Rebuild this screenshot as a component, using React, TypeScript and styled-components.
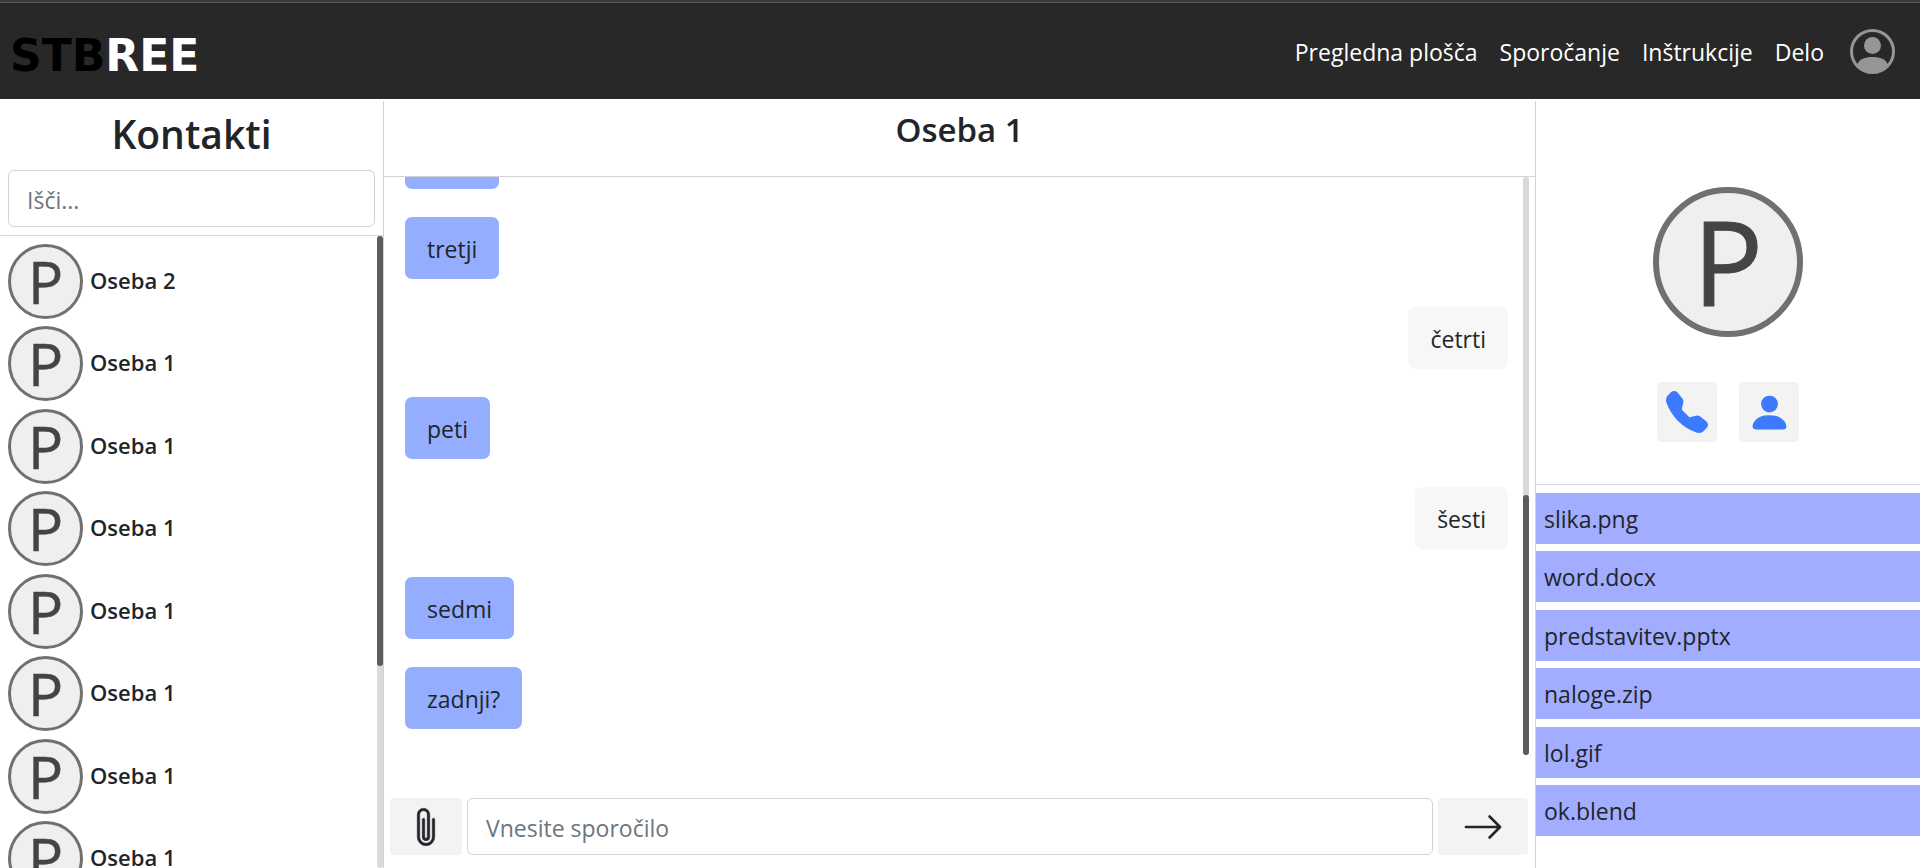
import React from "react";
import styled, { createGlobalStyle } from "styled-components";
import { BsArrowRight, BsPaperclip, BsPersonFill, BsTelephoneFill } from "react-icons/bs";

const GlobalStyle = createGlobalStyle`
  *, *::before, *::after { box-sizing: border-box; }
  body {
    margin: 0;
    background: #fff;
    color: #212529;
    font-family: "Open Sans", "Noto Sans", sans-serif;
    font-size: 23px;
    line-height: 36px;
  }
  h1, h2, p, ul { margin: 0; padding: 0; }
  ul { list-style: none; }
  button, input { font: inherit; color: inherit; }
`;

const line = "1px solid #d3d3d3";

const Page = styled.div`
  display: flex;
  flex-direction: column;
  gap: 2px;
  height: 100vh;
  overflow: hidden;
`;

const NavBar = styled.header`
  display: flex;
  flex: none;
  align-items: center;
  justify-content: space-between;
  height: 99px;
  padding: 2px 25px 0 10px;
  border-top: 2px solid #3b3b3b;
  box-shadow: inset 0 1px 0 #5a5a5a;
  background: #282828;
`;

const Logo = styled.a`
  padding-top: 8px;
  color: #000;
  font-family: "DejaVu Sans", sans-serif;
  font-size: 44px;
  font-weight: 700;
  line-height: 48px;
  text-decoration: none;
`;

const LogoAccent = styled.span`
  color: #fff;
`;

const NavLinks = styled.nav`
  display: flex;
  align-items: center;
  gap: 22px;
`;

const NavLink = styled.a`
  color: #fff;
  text-decoration: none;
`;

const ProfileButton = styled.button`
  display: flex;
  margin-left: 4px;
  padding: 0;
  border: 0;
  background: none;
`;

const Columns = styled.main`
  display: grid;
  flex: 1;
  grid-template-columns: 1fr 3fr 1fr;
  min-height: 0;
`;

const ContactsPanel = styled.aside`
  display: flex;
  flex-direction: column;
  min-width: 0;
  min-height: 0;
  border-right: ${line};
`;

const ContactsHeader = styled.div`
  padding: 5px 8px 8px;
  border-bottom: ${line};
`;

const PanelTitle = styled.h1`
  margin-bottom: 8px;
  font-size: 39px;
  font-weight: 600;
  line-height: 56px;
  text-align: center;
`;

const TextField = styled.input`
  display: block;
  width: 100%;
  min-width: 0;
  height: 57px;
  padding: 2px 18px 0;
  border: 1px solid #ced4da;
  border-radius: 6px;
  background: #fff;
  outline: 0;
  &::placeholder { color: #6c757d; opacity: 1; }
`;

const ScrollArea = styled.div`
  display: flex;
  flex: 1;
  min-height: 0;
`;

const ScrollTrack = styled.div<{ $atEnd?: boolean }>`
  display: flex;
  flex: none;
  flex-direction: column;
  justify-content: ${(p) => (p.$atEnd ? "flex-end" : "flex-start")};
  width: 6px;
  margin-right: ${(p) => (p.$atEnd ? "6px" : "0")};
  border-radius: 3px;
  background: #d9d9d9;
`;

const ScrollThumb = styled.div<{ $share: number }>`
  height: ${(p) => p.$share}%;
  border-radius: 3px;
  background: #5c5c5c;
`;

const ContactList = styled.ul`
  flex: 1;
  overflow: hidden;
  padding: 8px 0 0 8px;
`;

const Contact = styled.li`
  display: flex;
  align-items: center;
  gap: 7px;
  margin-bottom: 7px;
  &:nth-child(even) { margin-bottom: 8px; }
`;

const ContactName = styled.span`
  padding-bottom: 4px;
  font-size: 22px;
  font-weight: 600;
`;

const ChatPanel = styled.section`
  display: flex;
  flex-direction: column;
  min-width: 0;
  min-height: 0;
  border-right: ${line};
`;

const ChatTitle = styled.h2`
  flex: none;
  height: 76px;
  padding-top: 5px;
  border-bottom: ${line};
  font-size: 33px;
  font-weight: 600;
  line-height: 48px;
  text-align: center;
`;

const Messages = styled.ul`
  display: flex;
  flex: 1;
  flex-direction: column;
  justify-content: flex-end;
  gap: 28px;
  overflow: hidden;
  padding: 0 15px 26px 21px;
`;

const Bubble = styled.li<{ $own?: boolean }>`
  flex: none;
  align-self: ${(p) => (p.$own ? "flex-end" : "flex-start")};
  padding: 14px 22px 12px;
  border-radius: 7px;
  background: ${(p) => (p.$own ? "#f7f7f7" : "#94adff")};
`;

const Composer = styled.form`
  display: flex;
  flex: none;
  gap: 5px;
  padding: 43px 7px 13px 6px;
`;

const ComposerButton = styled.button<{ $wide?: boolean }>`
  display: flex;
  flex: none;
  align-items: center;
  justify-content: center;
  width: ${(p) => (p.$wide ? "90px" : "72px")};
  padding: 0;
  border: 0;
  border-radius: 4px;
  background: #f3f3f3;
`;

const ClipIcon = styled(BsPaperclip)`
  overflow: visible;
  stroke: currentColor;
  stroke-width: 0.2px;
`;

const DetailsPanel = styled.aside`
  min-width: 0;
`;

const Profile = styled.div`
  display: flex;
  flex-direction: column;
  align-items: center;
  gap: 45px;
  padding: 86px 0 42px;
  border-bottom: ${line};
`;

const Actions = styled.div`
  display: flex;
  gap: 22px;
`;

const ActionButton = styled.button`
  display: flex;
  align-items: center;
  justify-content: center;
  width: 60px;
  height: 60px;
  padding: 0;
  border: 0;
  border-radius: 4px;
  background: #f3f3f3;
  color: #3d7aff;
`;

const FileList = styled.ul`
  padding-top: 8px;
`;

const FileItem = styled.li`
  margin-bottom: 7px;
  padding: 8px 8px 7px;
  background: #a3adff;
  &:nth-child(even) { margin-bottom: 8px; }
`;

const FileLink = styled.a`
  display: block;
  color: inherit;
  text-decoration: none;
`;

const AvatarSvg = styled.svg`
  display: block;
  flex: none;
  overflow: visible;
`;

function Avatar({ size }: { size: number }) {
  return (
    <AvatarSvg width={size} height={size} viewBox="0 0 150 150" aria-hidden="true">
      <circle cx="75" cy="75" r="72" fill="#efefef" stroke="#707070" strokeWidth="6" />
      <text x="75" y="119" fill="#444" stroke="#444" strokeWidth="1" fontSize="117" textAnchor="middle">
        P
      </text>
    </AvatarSvg>
  );
}

function ProfileIcon() {
  return (
    <svg width="45" height="45" viewBox="0 0 90 90" aria-hidden="true">
      <circle cx="45" cy="45" r="42" fill="none" stroke="#969696" strokeWidth="6" />
      <circle cx="45" cy="33" r="17" fill="#969696" />
      <path d="M14 72C18 60 30 56 45 56S72 60 76 72C68 82 58 87 45 87S22 82 14 72Z" fill="#969696" />
    </svg>
  );
}

const links = ["Pregledna plošča", "Sporočanje", "Inštrukcije", "Delo"];

const contacts = ["Oseba 2", "Oseba 1", "Oseba 1", "Oseba 1", "Oseba 1", "Oseba 1", "Oseba 1", "Oseba 1"];

const messages = [
  { text: "tretji", own: false },
  { text: "tretji", own: false },
  { text: "četrti", own: true },
  { text: "peti", own: false },
  { text: "šesti", own: true },
  { text: "sedmi", own: false },
  { text: "zadnji?", own: false },
];

const files = ["slika.png", "word.docx", "predstavitev.pptx", "naloge.zip", "lol.gif", "ok.blend"];

export default function App() {
  return (
    <>
      <GlobalStyle />
      <Page>
        <NavBar>
          <Logo href="#">
            STB<LogoAccent>REE</LogoAccent>
          </Logo>
          <NavLinks>
            {links.map((label) => (
              <NavLink key={label} href="#">
                {label}
              </NavLink>
            ))}
            <ProfileButton type="button" aria-label="Profil">
              <ProfileIcon />
            </ProfileButton>
          </NavLinks>
        </NavBar>

        <Columns>
          <ContactsPanel>
            <ContactsHeader>
              <PanelTitle>Kontakti</PanelTitle>
              <TextField type="text" placeholder="Išči..." aria-label="Išči" />
            </ContactsHeader>
            <ScrollArea>
              <ContactList>
                {contacts.map((name, i) => (
                  <Contact key={i}>
                    <Avatar size={75} />
                    <ContactName>{name}</ContactName>
                  </Contact>
                ))}
              </ContactList>
              <ScrollTrack>
                <ScrollThumb $share={68} />
              </ScrollTrack>
            </ScrollArea>
          </ContactsPanel>

          <ChatPanel>
            <ChatTitle>Oseba 1</ChatTitle>
            <ScrollArea>
              <Messages>
                {messages.map((m, i) => (
                  <Bubble key={i} $own={m.own}>
                    {m.text}
                  </Bubble>
                ))}
              </Messages>
              <ScrollTrack $atEnd>
                <ScrollThumb $share={45} />
              </ScrollTrack>
            </ScrollArea>
            <Composer onSubmit={(e) => e.preventDefault()}>
              <ComposerButton type="button" aria-label="Pripni datoteko">
                <ClipIcon size={40} />
              </ComposerButton>
              <TextField type="text" placeholder="Vnesite sporočilo" aria-label="Sporočilo" />
              <ComposerButton type="submit" $wide aria-label="Pošlji">
                <BsArrowRight size={42} />
              </ComposerButton>
            </Composer>
          </ChatPanel>

          <DetailsPanel>
            <Profile>
              <Avatar size={150} />
              <Actions>
                <ActionButton type="button" aria-label="Pokliči">
                  <BsTelephoneFill size={42} />
                </ActionButton>
                <ActionButton type="button" aria-label="Ogled profila">
                  <BsPersonFill size={45} />
                </ActionButton>
              </Actions>
            </Profile>
            <FileList>
              {files.map((file) => (
                <FileItem key={file}>
                  <FileLink href="#">{file}</FileLink>
                </FileItem>
              ))}
            </FileList>
          </DetailsPanel>
        </Columns>
      </Page>
    </>
  );
}
